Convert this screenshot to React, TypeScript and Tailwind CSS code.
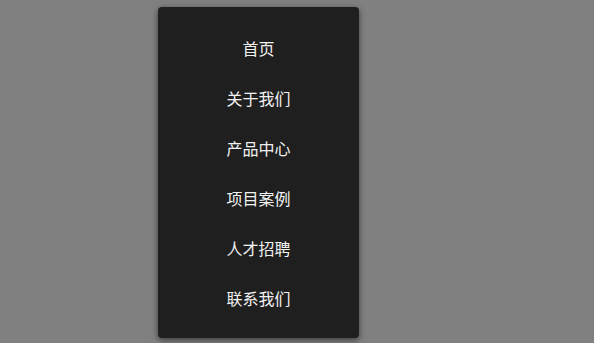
const items = ["首页", "关于我们", "产品中心", "项目案例", "人才招聘", "联系我们"];

export default function App() {
  return (
    <div className="w-[594px] h-[343px] bg-[#808080] overflow-hidden pt-[7px] pl-[158px]">
      <nav className="w-[201px] h-[331px] bg-[#1f1f1f] rounded-[4px] shadow-[0_2px_6px_rgba(0,0,0,0.55)] pt-4 flex flex-col">
        {items.map((item) => (
          <a
            key={item}
            href="#"
            className="h-[50px] flex items-center justify-center text-[16px] text-[#f2f2f2] font-['Microsoft_YaHei','Noto_Sans_CJK_SC',sans-serif]"
          >
            {item}
          </a>
        ))}
      </nav>
    </div>
  );
}
